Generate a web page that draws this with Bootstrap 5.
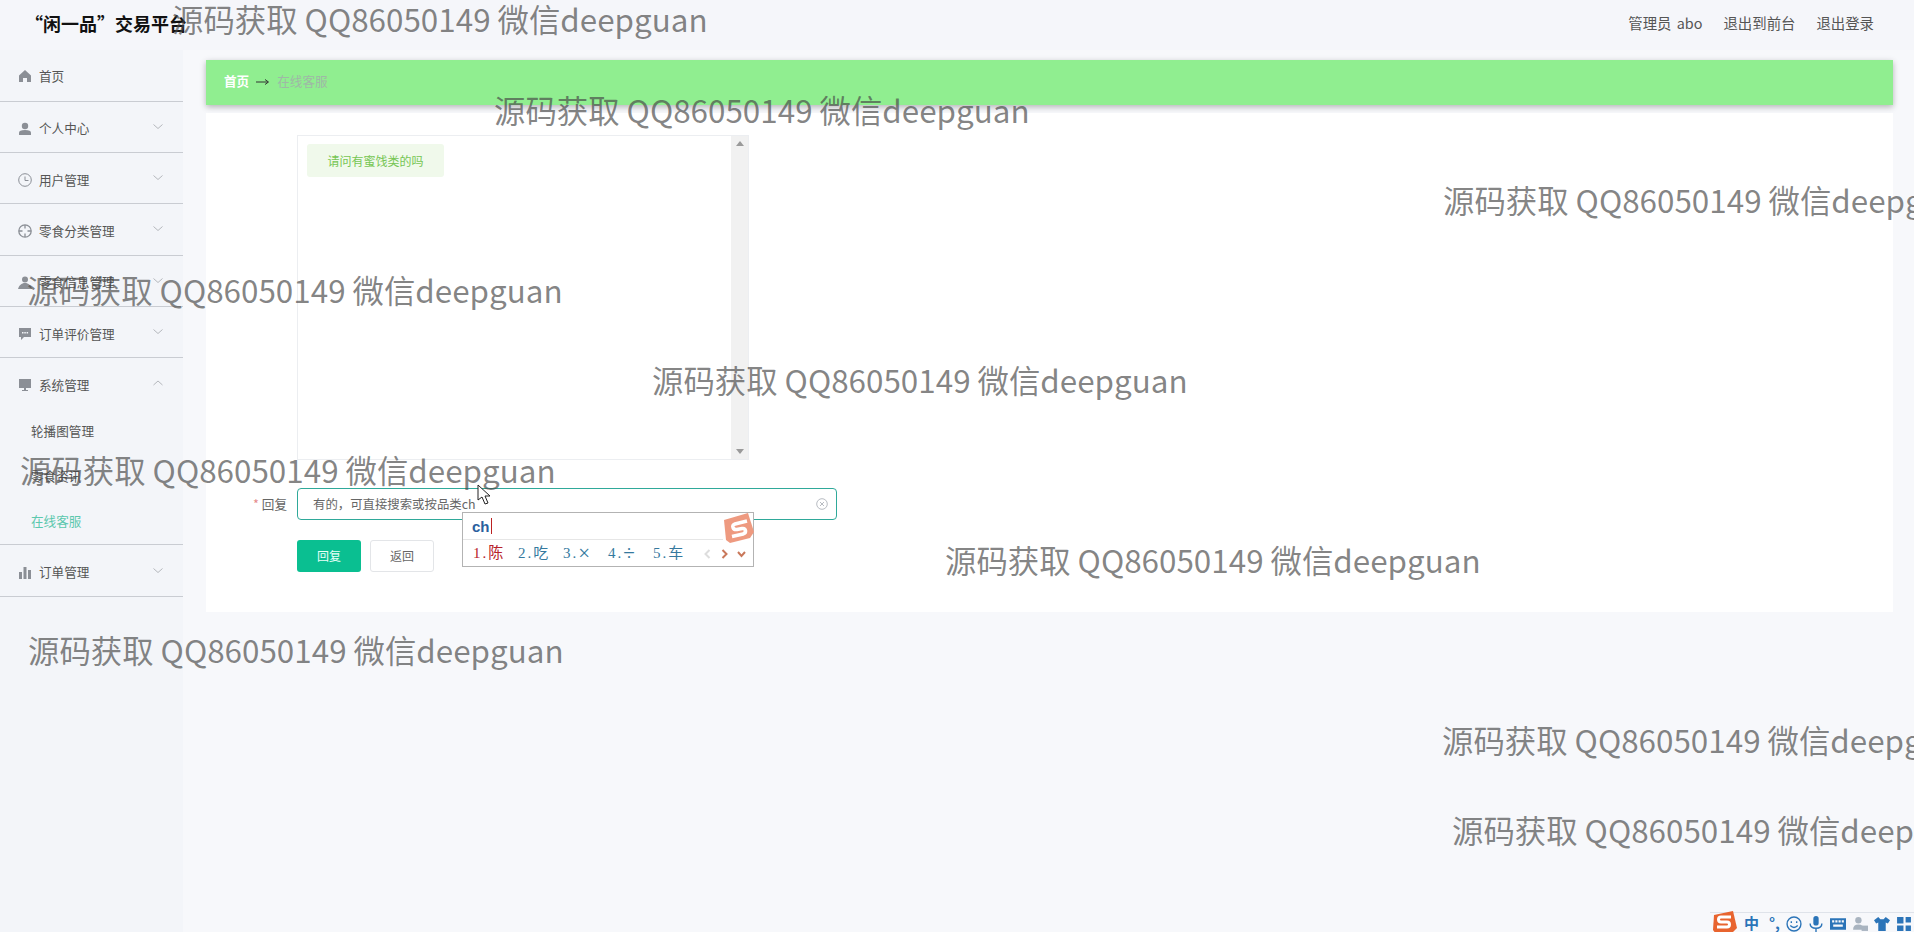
<!DOCTYPE html>
<html lang="zh-CN">

<head>
    <meta charset="UTF-8">
    <meta name="viewport" content="width=device-width, initial-scale=1.0">
    <title>闲一品交易平台</title>
    <link href="https://cdn.jsdelivr.net/npm/bootstrap@5.3.0/dist/css/bootstrap.min.css" rel="stylesheet">
    <style>
        html, body {
            height: 100%;
            overflow: hidden;
        }

        body {
            background-color: #f7f8fb;
            font-family: "Noto Sans CJK SC", "Liberation Sans", sans-serif;
            font-size: 12.6px;
            color: #555;
        }

        /* header */
        .top-bar {
            height: 50px;
            padding: 0 40px 4px 25px;
            background-color: #f5f6fa;
        }

        .top-title {
            font-size: 18px;
            font-weight: 700;
            color: #111;
        }

        .top-links {
            gap: 21px;
            color: #555;
            font-size: 14.4px;
            word-spacing: 2px;
        }

        /* side menu */
        .side-menu {
            width: 183px;
            height: 882px;
            flex: none;
            background-color: #f3f5f9;
        }

        .menu-row {
            height: 51.4px;
            padding: 4px 19px 0 18px;
            border-bottom: 1px solid #c9ccd2;
            color: #555;
        }

        .menu-row.first {
            height: 51.5px;
            padding-top: 2px;
        }

        .menu-row.open {
            border-bottom: 0;
            height: 49px;
        }

        .menu-icon {
            width: 14px;
            height: 14px;
            margin-right: 7px;
            fill: #8b8f96;
            flex: none;
        }

        .menu-arrow {
            width: 12px;
            height: 8px;
            margin-left: auto;
            margin-top: -4px;
            fill: none;
            stroke: #b5b8bd;
            stroke-width: 1;
        }

        .sub-list {
            padding: 1px 0 0 31px;
            border-bottom: 1px solid #c9ccd2;
            height: 138px;
        }

        .sub-item {
            height: 45px;
            line-height: 45px;
            color: #555;
        }

        .sub-item.active {
            color: #5cc8ae;
        }

        /* main area */
        .main-area {
            padding: 10px 21px 0 23px;
        }

        .crumb-bar {
            height: 45px;
            padding-left: 18px;
            padding-bottom: 2px;
            background-color: #90ee90;
            box-shadow: 0 2px 6px rgba(0, 0, 0, .28);
            gap: 7px;
        }

        .crumb-home {
            color: #fff;
            font-weight: 700;
        }

        .crumb-now {
            color: #9fb8a6;
        }

        .form-panel {
            height: 499px;
            margin-top: 8px;
            padding: 22px 0 0 91px;
            background-color: #fff;
        }

        .chat-box {
            width: 452px;
            height: 325px;
            border: 1px solid #eceef1;
        }

        .chat-list {
            padding: 8px 9px;
        }

        .chat-msg {
            width: 137px;
            height: 33px;
            background-color: #f0f9eb;
            color: #76c653;
            font-size: 12px;
            border-radius: 3px;
        }

        .chat-scroll {
            width: 17px;
            background-color: #f1f1f1;
            padding: 5px 0;
        }

        .scroll-tri {
            width: 8px;
            height: 5px;
            fill: #9a9a9a;
        }

        .reply-row {
            margin-top: 28px;
            margin-left: -91px;
        }

        .reply-label {
            width: 81px;
            margin-right: 10px;
            text-align: right;
            color: #666;
            flex: none;
        }

        .reply-label span {
            color: #e58a8a;
        }

        .reply-input {
            width: 540px;
            height: 32px;
            padding: 0 8px 0 15px;
            border: 1px solid #2fa99a;
            border-radius: 4px;
            color: #666;
            font-size: 12.4px;
        }

        .clear-icon {
            width: 12px;
            height: 12px;
            fill: none;
            stroke: #b8bcc2;
            margin-left: auto;
        }

        .btn-row {
            margin-top: 20px;
            gap: 9px;
        }

        .btn-reply, .btn-back {
            width: 64px;
            height: 32px;
            padding: 0;
            font-size: 12px;
            border-radius: 3px;
        }

        .btn-reply {
            background-color: #0abf91;
            color: #e9fff8;
            border: 0;
        }

        .btn-back {
            background-color: #fff;
            border: 1px solid #e3e5e8;
            color: #666;
        }

        /* things lying over the page */
        .water-mark {
            position: absolute;
            font-size: 31.4px;
            line-height: 40px;
            color: rgba(70, 70, 70, .66);
            white-space: nowrap;
            font-weight: 400;
            pointer-events: none;
        }

        .ime-box {
            position: absolute;
            left: 462px;
            top: 512px;
            width: 292px;
            height: 55px;
            background-color: #fff;
            border: 1px solid #b3b3b3;
        }

        .ime-input {
            height: 27px;
            margin: 0 30px 0 0;
            padding-left: 9px;
            border-bottom: 1px solid #e6e6e6;
            font: 700 15px "Liberation Sans", sans-serif;
            color: #2a5f9e;
        }

        .ime-caret {
            display: inline-block;
            width: 1px;
            height: 16px;
            background-color: #b22;
            margin-left: 1px;
        }

        .ime-list {
            height: 27px;
            padding-left: 10px;
            font-family: "Liberation Serif", "Noto Sans CJK SC", serif;
            font-size: 15px;
            color: #35799e;
            gap: 13px;
        }

        .ime-list > span {
            width: 32px;
            letter-spacing: 2px;
            white-space: nowrap;
        }

        .ime-sign {
            font-size: 21px;
            line-height: 1;
            font-weight: 300;
            vertical-align: -2px;
        }

        .ime-first {
            color: #b8222c;
        }

        .ime-arrows {
            margin-left: 5px;
            gap: 8px;
        }

        .ime-arrows svg {
            width: 9px;
            height: 10px;
            fill: none;
            stroke-width: 2;
        }

        .ime-logo {
            position: absolute;
            left: 260px;
            top: -1px;
            width: 31px;
            height: 31px;
        }

        .mouse-arrow {
            position: absolute;
            left: 477px;
            top: 484px;
            width: 13px;
            height: 21px;
        }

        .ime-tray {
            position: absolute;
            right: 0;
            bottom: 0;
            height: 20px;
            gap: 6px;
            padding-right: 2px;
            padding-top: 2px;
            border-top: 1px solid #dfe3ea;
            color: #2b74b8;
            font-weight: 700;
            font-size: 15px;
        }

        .ime-tray svg {
            width: 16px;
            height: 16px;
            fill: #2b74b8;
        }

        .ime-tray .tray-logo {
            width: 28px;
            height: 24px;
            margin-top: -4px;
        }

        .tray-zh {
            margin-right: 4px;
        }
    </style>
</head>

<body>
    <!-- Header -->
    <div class="top-bar d-flex align-items-center justify-content-between">
        <div class="top-title">“闲一品”交易平台</div>
        <div class="top-links d-flex">
            <span>管理员 abo</span>
            <span>退出到前台</span>
            <span>退出登录</span>
        </div>
    </div>

    <div class="d-flex">
        <!-- Side menu -->
        <div class="side-menu">
            <div class="menu-row first d-flex align-items-center">
                <svg class="menu-icon" viewBox="0 0 14 14"><path d="M7 1 1 6.500V13h4V9h4v4h4V6.500z"/></svg>首页
            </div>
            <div class="menu-row d-flex align-items-center">
                <svg class="menu-icon" viewBox="0 0 14 14"><circle cx="7" cy="4" r="3.200"/><path d="M1 13v-2.500C1 9 3 8 7 8s6 1 6 2.500V13z"/></svg>个人中心
                <svg class="menu-arrow" viewBox="0 0 12 8"><path d="M1.500 1.500 6 5.500l4.500-4"/></svg>
            </div>
            <div class="menu-row d-flex align-items-center">
                <svg class="menu-icon" viewBox="0 0 14 14" style="fill:none;stroke:#8b8f96"><circle cx="7" cy="7" r="6.300"/><path d="M7 3.500V7.500H10.500"/></svg>用户管理
                <svg class="menu-arrow" viewBox="0 0 12 8"><path d="M1.500 1.500 6 5.500l4.500-4"/></svg>
            </div>
            <div class="menu-row d-flex align-items-center">
                <svg class="menu-icon" viewBox="0 0 14 14" style="fill:none;stroke:#8b8f96;stroke-width:1.300"><circle cx="7" cy="7" r="6.200"/><path d="M7 1v3.500M7 9.500V13M1 7h3.500M9.500 7H13"/></svg>零食分类管理
                <svg class="menu-arrow" viewBox="0 0 12 8"><path d="M1.500 1.500 6 5.500l4.500-4"/></svg>
            </div>
            <div class="menu-row d-flex align-items-center">
                <svg class="menu-icon" viewBox="0 0 14 14"><circle cx="7" cy="3.500" r="3"/><path d="M0 13c1-3.500 3.500-6 7-6s6 2.500 7 6z"/></svg>零食信息管理
                <svg class="menu-arrow" viewBox="0 0 12 8"><path d="M1.500 1.500 6 5.500l4.500-4"/></svg>
            </div>
            <div class="menu-row d-flex align-items-center">
                <svg class="menu-icon" viewBox="0 0 14 14"><path fill-rule="evenodd" d="M1 1h12v9H6l-3 3v-3H1zM4 5h1.500v1.500H4zM6.300 5h1.500v1.500H6.300zM8.600 5h1.500v1.500H8.600z"/></svg>订单评价管理
                <svg class="menu-arrow" viewBox="0 0 12 8"><path d="M1.500 1.500 6 5.500l4.500-4"/></svg>
            </div>
            <div class="menu-row open d-flex align-items-center">
                <svg class="menu-icon" viewBox="0 0 14 14"><path d="M1 1h12v9H8v2h2v1H4v-1h2v-2H1z"/></svg>系统管理
                <svg class="menu-arrow" viewBox="0 0 12 8"><path d="M1.500 6 6 2l4.500 4"/></svg>
            </div>
            <div class="sub-list">
                <div class="sub-item">轮播图管理</div>
                <div class="sub-item">零食资讯</div>
                <div class="sub-item active">在线客服</div>
            </div>
            <div class="menu-row d-flex align-items-center">
                <svg class="menu-icon" viewBox="0 0 14 14"><path d="M1 6h3v7H1zM5.500 1h3v12h-3zM10 4h3v9h-3z"/></svg>订单管理
                <svg class="menu-arrow" viewBox="0 0 12 8"><path d="M1.500 1.500 6 5.500l4.500-4"/></svg>
            </div>
        </div>

        <!-- Main -->
        <div class="main-area flex-grow-1">
            <div class="crumb-bar d-flex align-items-center">
                <span class="crumb-home">首页</span>
                <svg width="14" height="8" viewBox="0 0 14 8"><path d="M0 4h12M9 1.500 12.500 4 9 6.500" fill="none" stroke="#333"/></svg>
                <span class="crumb-now">在线客服</span>
            </div>
            <div class="form-panel">
                <div class="chat-box d-flex">
                    <div class="chat-list flex-grow-1">
                        <div class="chat-msg d-flex align-items-center justify-content-center">请问有蜜饯类的吗</div>
                    </div>
                    <div class="chat-scroll d-flex flex-column align-items-center justify-content-between">
                        <svg class="scroll-tri" viewBox="0 0 8 5"><path d="M4 0 8 5H0z"/></svg>
                        <svg class="scroll-tri" viewBox="0 0 8 5"><path d="M0 0h8L4 5z"/></svg>
                    </div>
                </div>
                <div class="reply-row d-flex align-items-center">
                    <div class="reply-label"><span>*</span> 回复</div>
                    <div class="reply-input d-flex align-items-center">
                        有的，可直接搜索或按品类ch
                        <svg class="clear-icon" viewBox="0 0 12 12"><circle cx="6" cy="6" r="5.300"/><path d="M4 4l4 4M8 4l-4 4"/></svg>
                    </div>
                </div>
                <div class="btn-row d-flex">
                    <button type="button" class="btn btn-reply">回复</button>
                    <button type="button" class="btn btn-back">返回</button>
                </div>
            </div>
        </div>
    </div>

    <!-- Input method popup -->
    <div class="ime-box">
        <div class="ime-input d-flex align-items-center">ch<span class="ime-caret"></span></div>
        <div class="ime-list d-flex align-items-center">
            <span class="ime-first">1.陈</span>
            <span>2.吃</span>
            <span>3.<span class="ime-sign">×</span></span>
            <span>4.<span class="ime-sign">÷</span></span>
            <span>5.车</span>
            <div class="ime-arrows d-flex align-items-center">
                <svg viewBox="0 0 9 10" stroke="#ddd"><path d="M6.500 1 2.500 5l4 4"/></svg>
                <svg viewBox="0 0 9 10" stroke="#c9785a"><path d="M2.500 1l4 4-4 4"/></svg>
                <svg viewBox="0 0 9 10" stroke="#c9785a"><path d="M1 3l3.500 4L8 3"/></svg>
            </div>
        </div>
        <svg class="ime-logo" viewBox="0 0 31 31"><path d="M1 8 25 1l6 19-4 6-20 5-4-3z" fill="#ee9a80"/><path d="M24 9 12 12q-3 1-2 3.500t4 2l5-1q3-.5 3.500 2T20 22L9 24.500" fill="none" stroke="#fff" stroke-width="3.500"/></svg>
    </div>

    <svg class="mouse-arrow" viewBox="0 0 13 21"><path d="M1 1v15l4-3 3 7 3-1-3-7h5z" fill="#fff" stroke="#222"/></svg>

    <div class="ime-tray d-flex align-items-center">
        <svg class="tray-logo" viewBox="0 0 26 24"><path d="M3 5 22 1l4 17-4 4-17 2-3-4z" fill="#e8642f"/><path d="M20 7H10q-2.500 0-2.500 2.500T10 12h6q2.500 0 2.500 2.500T16 17H6" fill="none" stroke="#fff" stroke-width="3"/></svg>
        <span class="tray-zh">中</span>
        <span>°,</span>
        <svg viewBox="0 0 15 15" style="fill:none;stroke:#2b74b8;stroke-width:1.300"><circle cx="7.500" cy="7.500" r="6.500"/><path d="M4 9q3.500 3.500 7 0M5 5v1.500M10 5v1.500"/></svg>
        <svg viewBox="0 0 15 15"><rect x="5" y="0" width="5" height="9" rx="2.500"/><path d="M2 7q0 4.500 5.500 4.500T13 7M7.500 11.500V15" fill="none" stroke="#2b74b8" stroke-width="1.300"/></svg>
        <svg viewBox="0 0 15 15"><path fill-rule="evenodd" d="M0 2h15v11H0zM2 4v2h2V4zM5 4v2h2V4zM8 4v2h2V4zM11 4v2h2V4zM3 8v2h9V8z"/></svg>
        <svg viewBox="0 0 15 15" style="fill:#a9b4c0"><circle cx="6" cy="4" r="3"/><path d="M1 13q0-5 5-5t5 5z"/><rect x="9" y="9" width="6" height="5"/></svg>
        <svg viewBox="0 0 15 15"><path d="M4 1 0 4l2 3 2-1v8h7V6l2 1 2-3-4-3-2 2H6z"/></svg>
        <svg viewBox="0 0 15 15"><path d="M1 1h6v6H1zM9 1h5v5H9zM1 9h6v5H1zM9 9h5v5H9z"/></svg>
    </div>

    <!-- Watermarks -->
    <div class="water-mark" style="left:172px;top:-1px">源码获取 QQ86050149 微信deepguan</div>
    <div class="water-mark" style="left:494px;top:90px">源码获取 QQ86050149 微信deepguan</div>
    <div class="water-mark" style="left:1443px;top:180px">源码获取 QQ86050149 微信deepguan</div>
    <div class="water-mark" style="left:27px;top:270px">源码获取 QQ86050149 微信deepguan</div>
    <div class="water-mark" style="left:652px;top:360px">源码获取 QQ86050149 微信deepguan</div>
    <div class="water-mark" style="left:20px;top:450px">源码获取 QQ86050149 微信deepguan</div>
    <div class="water-mark" style="left:945px;top:540px">源码获取 QQ86050149 微信deepguan</div>
    <div class="water-mark" style="left:28px;top:630px">源码获取 QQ86050149 微信deepguan</div>
    <div class="water-mark" style="left:1442px;top:720px">源码获取 QQ86050149 微信deepguan</div>
    <div class="water-mark" style="left:1452px;top:810px">源码获取 QQ86050149 微信deepguan</div>

    <script src="https://cdn.jsdelivr.net/npm/bootstrap@5.3.0/dist/js/bootstrap.bundle.min.js"></script>
</body>

</html>
